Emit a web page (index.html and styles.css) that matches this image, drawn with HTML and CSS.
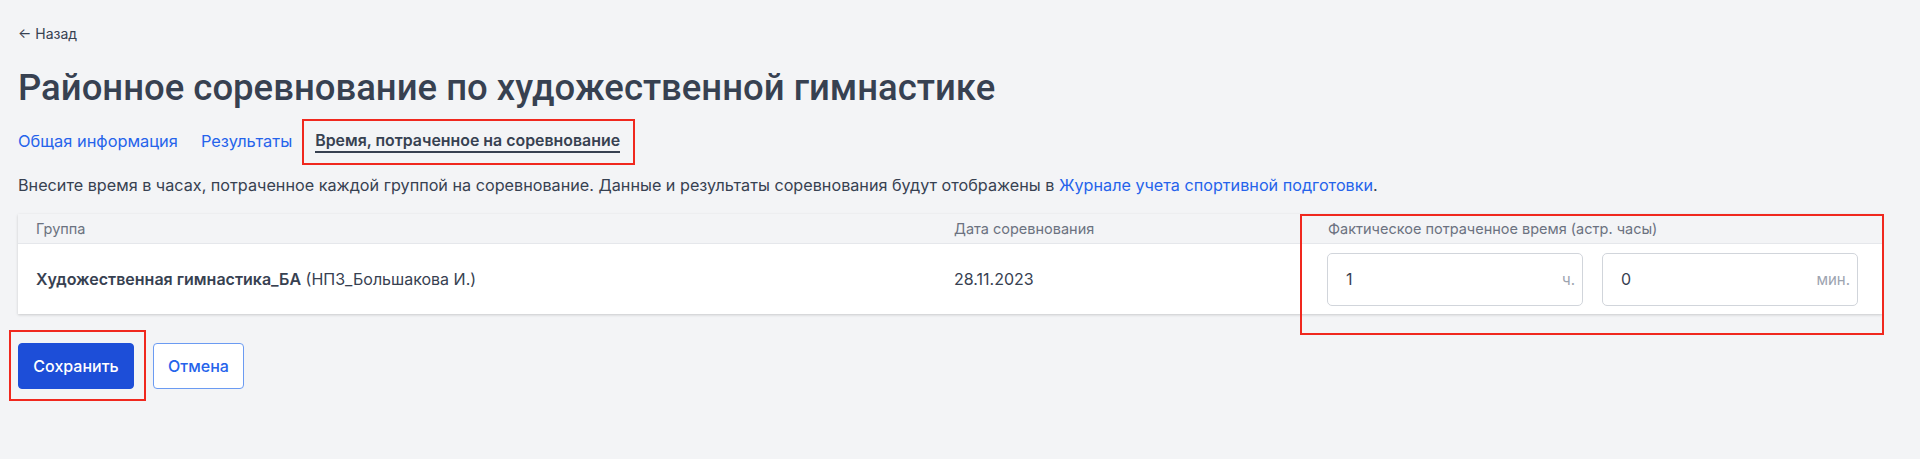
FILE: index.html
```html
<!DOCTYPE html>
<html lang="ru">
<head>
  <meta charset="UTF-8">
  <title>Районное соревнование по художественной гимнастике</title>
  <link rel="stylesheet" href="styles.css">
</head>
<body>
  <div class="page">
    <a class="back" href="#"><span class="back-arrow">&larr;</span> Назад</a>

    <h1 class="title">Районное соревнование по художественной гимнастике</h1>

    <div class="tabs">
      <a class="tab" href="#">Общая информация</a>
      <a class="tab" href="#">Результаты</a>
      <a class="tab tab-active" href="#">Время, потраченное на соревнование<span class="mark mark-tab"></span></a>
    </div>

    <p class="hint">Внесите время в часах, потраченное каждой группой на соревнование. Данные и результаты соревнования будут отображены в <a href="#">Журнале учета спортивной подготовки</a>.</p>

    <div class="table">
      <div class="cell head">Группа</div>
      <div class="cell head">Дата соревнования</div>
      <div class="cell head">Фактическое потраченное время (астр. часы)</div>

      <div class="cell body"><b>Художественная гимнастика_БА</b>&nbsp;(НПЗ_Большакова И.)</div>
      <div class="cell body">28.11.2023</div>
      <div class="cell body time">
        <label class="field"><input type="text" value="1"><span class="unit">ч.</span></label>
        <label class="field"><input type="text" value="0"><span class="unit">мин.</span></label>
      </div>

      <span class="mark mark-time"></span>
    </div>

    <div class="actions">
      <button class="btn btn-primary">Сохранить<span class="mark mark-save"></span></button>
      <button class="btn btn-outline">Отмена</button>
    </div>
  </div>
</body>
</html>
```

FILE: styles.css
```css
body {
  margin: 0;
  background-color: #f3f4f6;
  color: #374151;
  font-family: Inter, "Noto Sans", sans-serif;
}
a {
  color: #2563eb;
  text-decoration: none;
}
.page {
  padding: 24px 38px 40px 18px;
}
.back {
  display: block;
  font-size: 14px;
  line-height: 20px;
  color: #374151;
}
.title {
  margin: 21px 0 0;
  font-family: Roboto, Inter, sans-serif;
  font-size: 36.5px;
  line-height: 46px;
  font-weight: 500;
  color: #374151;
}
.tabs {
  display: flex;
  gap: 23px;
  margin-top: 20px;
}
.tab {
  position: relative;
  font-size: 16.4px;
  line-height: 20px;
  border-bottom: 2px solid transparent;
}
.tab-active {
  color: #374151;
  font-size: 15.9px;
  font-weight: 600;
  border-bottom-color: #374151;
}
.hint {
  margin: 22px 0 0;
  font-size: 16.2px;
  line-height: 20px;
}
.table {
  position: relative;
  display: grid;
  grid-template-columns: 918px 374px 1fr;
  margin-top: 19px;
  background: #fff;
  box-shadow: 0 1px 3px rgba(0, 0, 0, 0.12), 0 1px 2px rgba(0, 0, 0, 0.06);
}
.cell {
  display: flex;
  align-items: center;
  padding: 0 18px;
}
.head {
  height: 30px;
  font-size: 14.5px;
  color: #6b7280;
  background: #f3f4f6;
  border-bottom: 1px solid #e5e7eb;
  box-sizing: border-box;
}
.body {
  height: 70px;
  font-size: 16px;
}
.body b {
  font-weight: 600;
}
.time {
  gap: 19px;
  padding-left: 17px;
}
.field {
  display: flex;
  align-items: baseline;
  width: 256px;
  height: 53px;
  box-sizing: border-box;
  padding: 0 7px 0 18px;
  border: 1px solid #d1d5db;
  border-radius: 5px;
  background: #fff;
}
.field input {
  flex: 1;
  min-width: 0;
  border: none;
  outline: none;
  padding: 0;
  font-family: inherit;
  font-size: 16px;
  line-height: 51px;
  color: #374151;
  background: transparent;
}
.unit {
  font-size: 15px;
  color: #9ca3af;
}
.actions {
  display: flex;
  gap: 19px;
  margin-top: 29px;
}
.btn {
  position: relative;
  height: 46px;
  padding: 0;
  border-radius: 4px;
  font-family: inherit;
  font-size: 16px;
  font-weight: 500;
  cursor: pointer;
}
.btn-primary {
  width: 116px;
  border: 1px solid #1d4ed8;
  background: #1d4ed8;
  color: #fff;
}
.btn-outline {
  width: 91px;
  border: 1px solid #6b9bf2;
  background: #fff;
  color: #2563eb;
}
.mark {
  position: absolute;
  border: 2px solid #f0281e;
  pointer-events: none;
}
.mark-tab {
  top: -12px;
  bottom: -14px;
  left: -13px;
  right: -15px;
}
.mark-time {
  top: 0;
  right: -2px;
  bottom: -21px;
  width: 584px;
  box-sizing: border-box;
}
.mark-save {
  top: -14px;
  bottom: -13px;
  left: -10px;
  right: -13px;
}
```
